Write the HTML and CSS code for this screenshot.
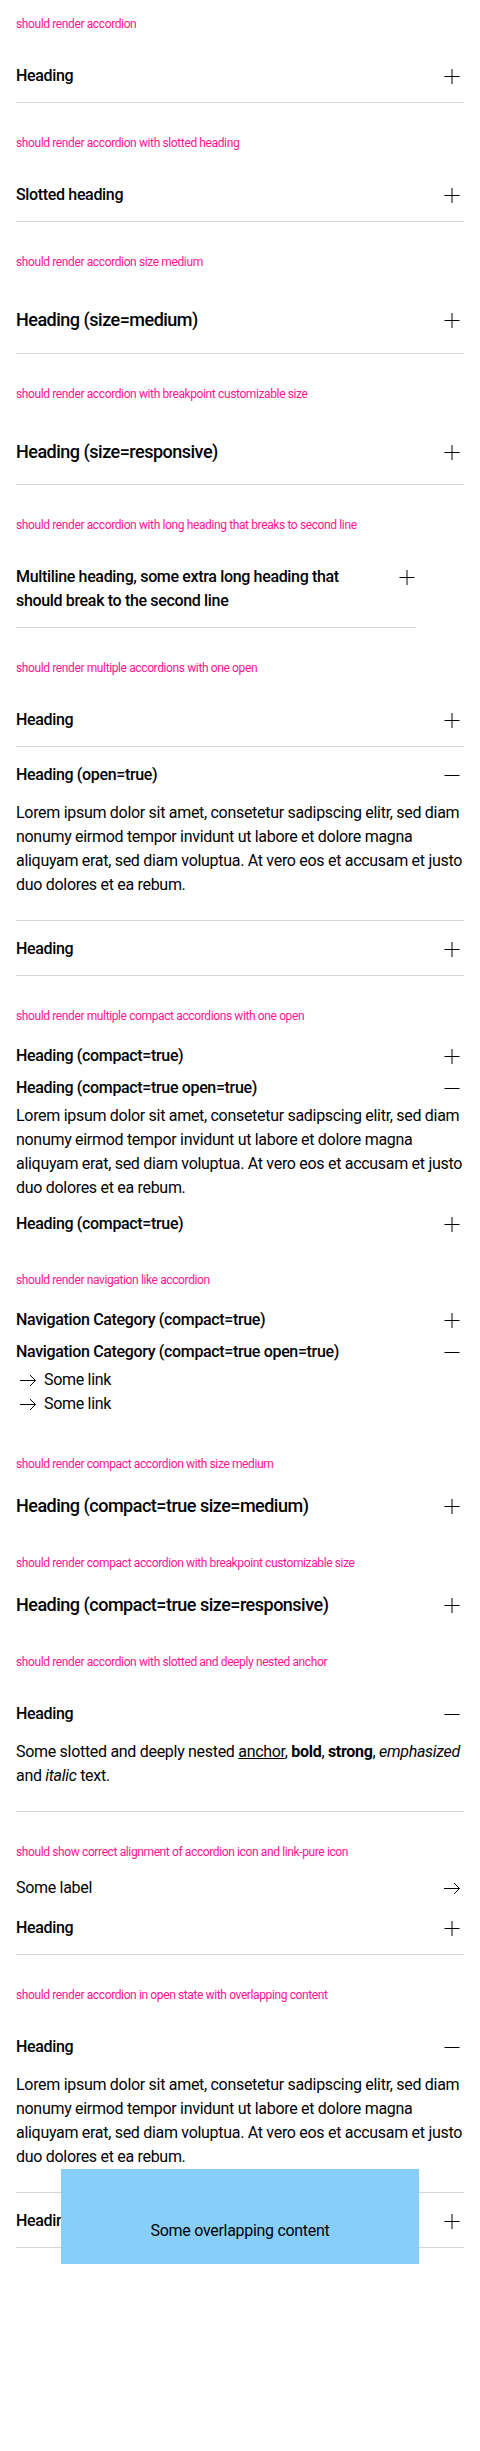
FILE: index.html
```html
<!DOCTYPE html>
<html lang="en">
<head>
<meta charset="utf-8">
<title>Accordion</title>
<link rel="stylesheet" href="styles.css">
</head>
<body>

<div class="playground">
  <p class="pg-title">should render accordion</p>
  <div class="acc">
    <div class="acc__item">
      <div class="acc__head"><span class="acc__label">Heading</span><span class="acc__icon"><svg class="ico" viewBox="0 0 24 24" width="24" height="24"><path d="M12 5v15M4.5 12.5h15"/></svg></span></div>
    </div>
  </div>
</div>

<div class="playground">
  <p class="pg-title">should render accordion with slotted heading</p>
  <div class="acc">
    <div class="acc__item">
      <div class="acc__head"><span class="acc__label">Slotted heading</span><span class="acc__icon"><svg class="ico" viewBox="0 0 24 24" width="24" height="24"><path d="M12 5v15M4.5 12.5h15"/></svg></span></div>
    </div>
  </div>
</div>

<div class="playground">
  <p class="pg-title">should render accordion size medium</p>
  <div class="acc acc--medium">
    <div class="acc__item">
      <div class="acc__head"><span class="acc__label">Heading (size=medium)</span><span class="acc__icon"><svg class="ico" viewBox="0 0 24 24" width="24" height="24"><path d="M12 5v15M4.5 12.5h15"/></svg></span></div>
    </div>
  </div>
</div>

<div class="playground">
  <p class="pg-title">should render accordion with breakpoint customizable size</p>
  <div class="acc acc--medium">
    <div class="acc__item">
      <div class="acc__head"><span class="acc__label">Heading (size=responsive)</span><span class="acc__icon"><svg class="ico" viewBox="0 0 24 24" width="24" height="24"><path d="M12 5v15M4.5 12.5h15"/></svg></span></div>
    </div>
  </div>
</div>

<div class="playground">
  <p class="pg-title">should render accordion with long heading that breaks to second line</p>
  <div class="acc acc--narrow">
    <div class="acc__item">
      <div class="acc__head"><span class="acc__label">Multiline heading, some extra long heading that should break to the second line</span><span class="acc__icon acc__icon--shift"><svg class="ico" viewBox="0 0 24 24" width="24" height="24"><path d="M12 5v15M4.5 12.5h15"/></svg></span></div>
    </div>
  </div>
</div>

<div class="playground">
  <p class="pg-title">should render multiple accordions with one open</p>
  <div class="acc">
    <div class="acc__item">
      <div class="acc__head"><span class="acc__label">Heading</span><span class="acc__icon"><svg class="ico" viewBox="0 0 24 24" width="24" height="24"><path d="M12 5v15M4.5 12.5h15"/></svg></span></div>
    </div>
    <div class="acc__item">
      <div class="acc__head"><span class="acc__label">Heading (open=true)</span><span class="acc__icon"><svg class="ico" viewBox="0 0 24 24" width="24" height="24"><path d="M4.5 12.5h15"/></svg></span></div>
      <div class="acc__body">Lorem ipsum dolor sit amet, consetetur sadipscing elitr, sed diam nonumy eirmod tempor invidunt ut labore et dolore magna aliquyam erat, sed diam voluptua. At vero eos et accusam et justo duo dolores et ea rebum.</div>
    </div>
    <div class="acc__item">
      <div class="acc__head"><span class="acc__label">Heading</span><span class="acc__icon"><svg class="ico" viewBox="0 0 24 24" width="24" height="24"><path d="M12 5v15M4.5 12.5h15"/></svg></span></div>
    </div>
  </div>
</div>

<div class="playground">
  <p class="pg-title">should render multiple compact accordions with one open</p>
  <div class="acc">
    <div class="acc__item acc__item--compact">
      <div class="acc__head"><span class="acc__label">Heading (compact=true)</span><span class="acc__icon"><svg class="ico" viewBox="0 0 24 24" width="24" height="24"><path d="M12 5v15M4.5 12.5h15"/></svg></span></div>
    </div>
    <div class="acc__item acc__item--compact">
      <div class="acc__head"><span class="acc__label">Heading (compact=true open=true)</span><span class="acc__icon"><svg class="ico" viewBox="0 0 24 24" width="24" height="24"><path d="M4.5 12.5h15"/></svg></span></div>
      <div class="acc__body">Lorem ipsum dolor sit amet, consetetur sadipscing elitr, sed diam nonumy eirmod tempor invidunt ut labore et dolore magna aliquyam erat, sed diam voluptua. At vero eos et accusam et justo duo dolores et ea rebum.</div>
    </div>
    <div class="acc__item acc__item--compact">
      <div class="acc__head"><span class="acc__label">Heading (compact=true)</span><span class="acc__icon"><svg class="ico" viewBox="0 0 24 24" width="24" height="24"><path d="M12 5v15M4.5 12.5h15"/></svg></span></div>
    </div>
  </div>
</div>

<div class="playground">
  <p class="pg-title">should render navigation like accordion</p>
  <div class="acc">
    <div class="acc__item acc__item--compact">
      <div class="acc__head"><span class="acc__label">Navigation Category (compact=true)</span><span class="acc__icon"><svg class="ico" viewBox="0 0 24 24" width="24" height="24"><path d="M12 5v15M4.5 12.5h15"/></svg></span></div>
    </div>
    <div class="acc__item acc__item--compact">
      <div class="acc__head"><span class="acc__label">Navigation Category (compact=true open=true)</span><span class="acc__icon"><svg class="ico" viewBox="0 0 24 24" width="24" height="24"><path d="M4.5 12.5h15"/></svg></span></div>
      <div class="acc__body">
        <div class="nav-link"><svg class="ico" viewBox="0 0 24 24" width="24" height="24"><path d="M4 12.5h15.5M14 7l5.5 5.5L14 18"/></svg><span>Some link</span></div>
        <div class="nav-link"><svg class="ico" viewBox="0 0 24 24" width="24" height="24"><path d="M4 12.5h15.5M14 7l5.5 5.5L14 18"/></svg><span>Some link</span></div>
      </div>
    </div>
  </div>
</div>

<div class="playground">
  <p class="pg-title">should render compact accordion with size medium</p>
  <div class="acc acc--medium">
    <div class="acc__item acc__item--compact">
      <div class="acc__head"><span class="acc__label">Heading (compact=true size=medium)</span><span class="acc__icon"><svg class="ico" viewBox="0 0 24 24" width="24" height="24"><path d="M12 5v15M4.5 12.5h15"/></svg></span></div>
    </div>
  </div>
</div>

<div class="playground">
  <p class="pg-title">should render compact accordion with breakpoint customizable size</p>
  <div class="acc acc--medium">
    <div class="acc__item acc__item--compact">
      <div class="acc__head"><span class="acc__label">Heading (compact=true size=responsive)</span><span class="acc__icon"><svg class="ico" viewBox="0 0 24 24" width="24" height="24"><path d="M12 5v15M4.5 12.5h15"/></svg></span></div>
    </div>
  </div>
</div>

<div class="playground">
  <p class="pg-title">should render accordion with slotted and deeply nested anchor</p>
  <div class="acc">
    <div class="acc__item">
      <div class="acc__head"><span class="acc__label">Heading</span><span class="acc__icon"><svg class="ico" viewBox="0 0 24 24" width="24" height="24"><path d="M4.5 12.5h15"/></svg></span></div>
      <div class="acc__body">Some slotted and deeply nested <a class="anchor" href="#">anchor</a>, <b>bold</b>, <strong>strong</strong>, <em>emphasized</em> and <i>italic</i> text.</div>
    </div>
  </div>
</div>

<div class="playground">
  <p class="pg-title">should show correct alignment of accordion icon and link-pure icon</p>
  <div class="link-pure"><span>Some label</span><svg class="ico" viewBox="0 0 24 24" width="24" height="24"><path d="M4 12.5h15.5M14 7l5.5 5.5L14 18"/></svg></div>
  <div class="acc">
    <div class="acc__item">
      <div class="acc__head"><span class="acc__label">Heading</span><span class="acc__icon"><svg class="ico" viewBox="0 0 24 24" width="24" height="24"><path d="M12 5v15M4.5 12.5h15"/></svg></span></div>
    </div>
  </div>
</div>

<div class="playground">
  <p class="pg-title">should render accordion in open state with overlapping content</p>
  <div class="acc acc--overlap">
    <div class="acc__item">
      <div class="acc__head"><span class="acc__label">Heading</span><span class="acc__icon"><svg class="ico" viewBox="0 0 24 24" width="24" height="24"><path d="M4.5 12.5h15"/></svg></span></div>
      <div class="acc__body">
        <div>Lorem ipsum dolor sit amet, consetetur sadipscing elitr, sed diam nonumy eirmod tempor invidunt ut labore et dolore magna aliquyam erat, sed diam voluptua. At vero eos et accusam et justo duo dolores et ea rebum.</div>
        <div class="overlap">Some overlapping content</div>
      </div>
    </div>
    <div class="acc__item">
      <div class="acc__head"><span class="acc__label">Heading</span><span class="acc__icon"><svg class="ico" viewBox="0 0 24 24" width="24" height="24"><path d="M12 5v15M4.5 12.5h15"/></svg></span></div>
    </div>
  </div>
</div>

</body>
</html>
```

FILE: styles.css
```css
* {
  box-sizing: border-box;
}

body {
  margin: 0;
  background: #ffffff;
  color: #010205;
  font-family: Roboto, "Liberation Sans", sans-serif;
}

.playground {
  padding: 16px;
}

.pg-title {
  margin: 0 0 16px;
  font-size: 12px;
  line-height: 16px;
  letter-spacing: -0.38px;
  color: #ff1493;
}

.acc--narrow {
  max-width: 400px;
}

.acc--overlap {
  position: relative;
}

.acc__item {
  border-bottom: 1px solid #d8d8db;
}

.acc__item--compact {
  border-bottom: 0;
}

.acc__head {
  display: flex;
  justify-content: space-between;
  align-items: flex-start;
  gap: 24px;
  padding: 16px 0 14px;
  font-size: 16px;
  line-height: 24px;
  font-weight: 500;
  letter-spacing: -0.34px;
}

.acc__item--compact .acc__head {
  padding: 4px 0;
}

.acc--medium .acc__head {
  padding: 20px 0 18.5px;
  font-size: 18px;
  line-height: 28px;
  letter-spacing: -0.5px;
}

.acc--medium .acc__item--compact .acc__head {
  padding: 4px 0 3px;
}

.acc__icon {
  flex: none;
  width: 24px;
  height: 24px;
  display: flex;
}

.acc--medium .acc__icon {
  margin-top: 2px;
}

.acc__icon--shift {
  margin-right: -3px;
}

.ico {
  display: block;
  flex: none;
}

.ico path {
  fill: none;
  stroke: #010205;
  stroke-width: 1;
}

.acc__body {
  padding-bottom: 23px;
  font-size: 16px;
  line-height: 24px;
  letter-spacing: -0.3px;
}

.acc__item--compact .acc__body {
  padding-bottom: 8px;
}

.anchor {
  color: inherit;
  text-decoration: underline;
}

b,
strong {
  font-weight: 700;
}

.nav-link {
  display: flex;
  align-items: center;
  gap: 4px;
  height: 24px;
  font-size: 16px;
  line-height: 24px;
}

.link-pure {
  display: flex;
  justify-content: space-between;
  align-items: center;
  height: 24px;
  font-size: 16px;
  line-height: 24px;
  letter-spacing: -0.3px;
}

.overlap {
  position: absolute;
  left: 10%;
  width: 80%;
  height: 124px;
  display: flex;
  align-items: center;
  justify-content: center;
  background: #87cefa;
  z-index: 1;
}
```
